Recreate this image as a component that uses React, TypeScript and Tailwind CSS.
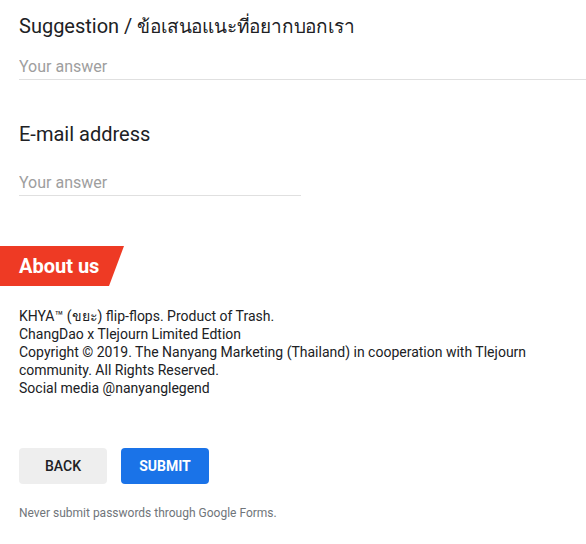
import React from 'react';

const AnswerField: React.FC<{ className?: string }> = ({ className }) => (
  <input
    type="text"
    placeholder="Your answer"
    className={
      'block h-[26px] border-b border-[#e0e0e0] bg-transparent text-base text-[#202124] outline-none placeholder:text-[#9e9e9e] ' +
      (className ?? '')
    }
  />
);

const App: React.FC = () => {
  return (
    <div className="w-[586px] h-[544px] bg-white overflow-hidden font-['Roboto','Noto_Sans',sans-serif]">
      <div className="pl-[19px] pt-[14px]">
        <div className="text-[20px] leading-[24px] text-[#202124]">
          Suggestion / <span className="text-[19px] tracking-[-0.2px]">ข้อเสนอแนะที่อยากบอกเรา</span>
        </div>
        <AnswerField className="mt-[15px] w-full" />
      </div>

      <div className="pl-[19px] pt-[42px]">
        <div className="text-[20px] leading-[24px] text-[#202124]">E-mail address</div>
        <AnswerField className="mt-[24px] w-[282px]" />
      </div>

      <div className="mt-[50px] relative h-[40px] w-[125px]">
        <svg className="absolute inset-0" width="125" height="40" viewBox="0 0 125 40">
          <polygon points="0,0 124,0 109,40 0,40" fill="#ee3a24" />
        </svg>
        <div className="relative pl-[19px] text-[20px] leading-[40px] font-bold text-white">About us</div>
      </div>

      <div className="pl-[19px] pr-[40px] pt-[21px] text-sm leading-[18px] text-[#202124]">
        <div>KHYA™ (ขยะ) flip-flops. Product of Trash.</div>
        <div>ChangDao x Tlejourn Limited Edtion</div>
        <div>Copyright © 2019. The Nanyang Marketing (Thailand) in cooperation with Tlejourn community. All Rights Reserved.</div>
        <div>Social media @nanyanglegend</div>
      </div>

      <div className="pl-[19px] pt-[51px] flex gap-[14px]">
        <button className="w-[88px] h-[36px] rounded bg-[#eeeeee] text-sm font-medium text-[#202124]">BACK</button>
        <button className="w-[88px] h-[36px] rounded bg-[#1a73e8] text-sm font-bold text-white">SUBMIT</button>
      </div>

      <div className="pl-[19px] pt-[21px] text-xs text-[#70757a]">Never submit passwords through Google Forms.</div>
    </div>
  );
};

export default App;
